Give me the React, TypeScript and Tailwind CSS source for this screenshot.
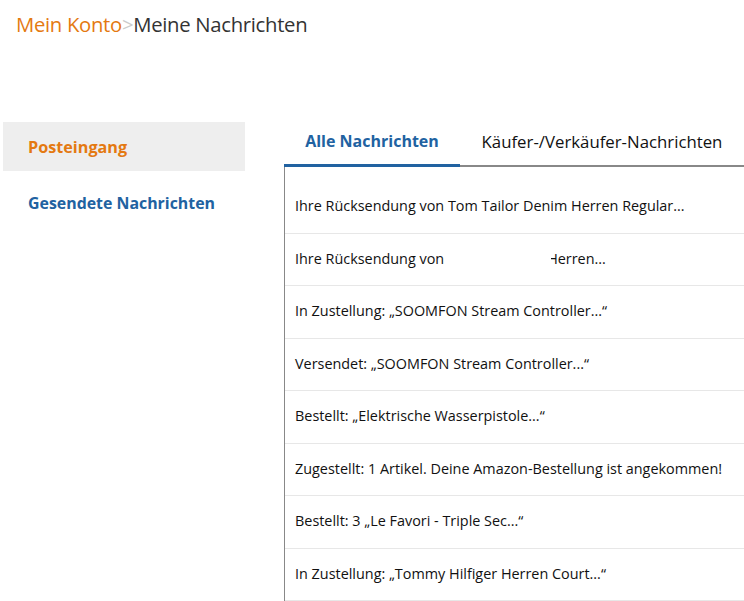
import React from "react";

const rows = [
  "Ihre Rücksendung von Tom Tailor Denim Herren Regular...",
  "REDACTED",
  "In Zustellung: „SOOMFON Stream Controller...“",
  "Versendet: „SOOMFON Stream Controller...“",
  "Bestellt: „Elektrische Wasserpistole...“",
  "Zugestellt: 1 Artikel. Deine Amazon-Bestellung ist angekommen!",
  "Bestellt: 3 „Le Favori - Triple Sec...“",
  "In Zustellung: „Tommy Hilfiger Herren Court...“",
];

export default function App() {
  return (
    <div
      className="min-h-screen w-[744px] bg-white overflow-hidden text-[#111]"
      style={{ fontFamily: "'Open Sans', 'Noto Sans', sans-serif" }}
    >
      {/* Breadcrumb */}
      <div className="pl-4 pt-[8px] text-[20.3px] leading-[32px] tracking-[-0.3px]">
        <span className="text-[#e47911]">Mein Konto</span>
        <span className="text-[#ccc]">&gt;</span>
        <span className="text-[#333]">Meine Nachrichten</span>
      </div>

      <div className="flex mt-[82px]">
        {/* Sidebar */}
        <div className="w-[245px] pl-[3px] shrink-0">
          <div className="h-[49px] bg-[#eeeeee] flex items-center pl-[25px] pt-[2px] font-bold text-[16.2px] text-[#e47911]">
            Posteingang
          </div>
          <div className="h-[64px] flex items-center pl-[25px] pt-[2px] font-bold text-[15.9px] text-[#2162a1]">
            Gesendete Nachrichten
          </div>
        </div>

        {/* Main */}
        <div className="flex-1 ml-[39px] min-w-0">
          <div className="flex h-[45px] items-end">
            <div className="w-[176px] h-full flex items-center justify-center pb-[4px] font-bold text-[16px] text-[#2162a1] border-b-[3px] border-[#2162a1]">
              Alle Nachrichten
            </div>
            <div className="flex-1 h-full flex items-center justify-center pb-[4px] text-[16.8px] text-[#111] border-b-2 border-[#888]">
              Käufer-/Verkäufer-Nachrichten
            </div>
          </div>
          <div className="border-l border-[#888] pt-[14px]">
            {rows.map((r, i) => (
              <div
                key={i}
                className="h-[52.5px] flex items-center pl-[10px] pb-[1px] text-[14.4px] border-b border-[#e7e7e7] whitespace-nowrap"
              >
                {r === "REDACTED" ? (
                  <>
                    <span>Ihre Rücksendung von</span>
                    <span className="inline-block w-[103px]" />
                    <span className="relative">
                      Herren...
                      <span className="absolute left-0 top-0 h-full w-[4px] bg-white" />
                    </span>
                  </>
                ) : (
                  r
                )}
              </div>
            ))}
          </div>
        </div>
      </div>
    </div>
  );
}
